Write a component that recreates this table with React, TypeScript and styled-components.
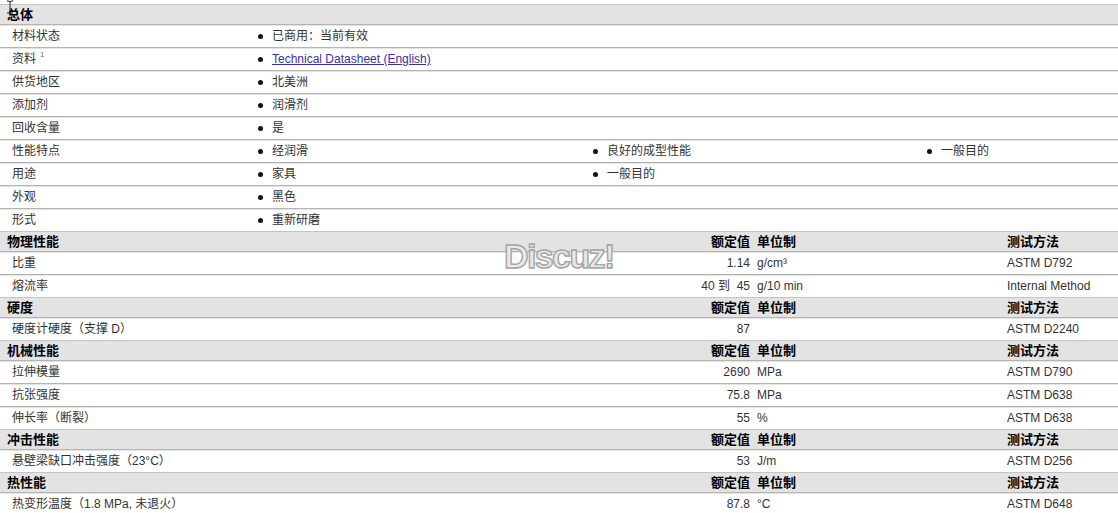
import React from "react";
import styled, { createGlobalStyle } from "styled-components";

const GlobalStyle = createGlobalStyle`
  html, body { margin: 0; padding: 0; background: #ffffff; }
  body {
    font-family: "Liberation Sans", Arial, "Noto Sans CJK SC", sans-serif;
    font-size: 12px;
    color: #333333;
  }
`;

const Page = styled.div`
  position: relative;
  padding-top: 4px;
  width: 1118px;
  overflow: hidden;
`;

const Cursor = styled.svg`
  position: absolute;
  left: 5px;
  top: 0;
`;

const Watermark = styled.div`
  position: absolute;
  left: 504px;
  top: 237px;
  font-family: "Liberation Sans", Arial, sans-serif;
  font-weight: 700;
  font-size: 34px;
  letter-spacing: -1.6px;
  color: #e8e8e8;
  -webkit-text-stroke: 1.4px #a4a4a4;
  pointer-events: none;
`;

const HeaderBar = styled.div<{ $cols?: string }>`
  display: grid;
  grid-template-columns: ${(p) => p.$cols || "1fr"};
  align-items: center;
  height: 20px;
  box-sizing: border-box;
  background: #e3e3e3;
  border-top: 1px solid #c4c4c4;
  font-family: "Liberation Sans", "Noto Sans CJK SC", sans-serif;
  font-weight: 700;
  font-size: 13px;
  color: #000000;
`;

const HeadCell = styled.div<{ $align?: string; $pl?: number; $pr?: number }>`
  text-align: ${(p) => p.$align || "left"};
  padding-left: ${(p) => p.$pl ?? 0}px;
  padding-right: ${(p) => p.$pr ?? 0}px;
  white-space: nowrap;
  line-height: 19px;
`;

const Row = styled.div<{ $cols: string }>`
  display: grid;
  grid-template-columns: ${(p) => p.$cols};
  align-items: center;
  height: 23px;
  box-sizing: border-box;
  border-top: 1px solid #b4b4b4;
  box-shadow: inset 0 1px 0 #e4e4e4;
  font-family: "Liberation Sans", "Noto Sans CJK SC", sans-serif;
  font-size: 12px;
  color: #333333;
`;

const Cell = styled.div<{ $align?: string; $pl?: number; $pr?: number }>`
  display: flex;
  align-items: center;
  justify-content: ${(p) => (p.$align === "right" ? "flex-end" : "flex-start")};
  padding-left: ${(p) => p.$pl ?? 0}px;
  padding-right: ${(p) => p.$pr ?? 0}px;
  white-space: pre;
  line-height: 22px;
`;

const Bullet = styled.span`
  display: inline-block;
  width: 5px;
  height: 5px;
  border-radius: 50%;
  background: #111111;
  margin-left: 3px;
  margin-right: 9px;
  flex-shrink: 0;
`;

const Sup = styled.sup`
  font-size: 8px;
  color: #777777;
  margin-left: 4px;
  position: relative;
  top: -4px;
`;

const Link = styled.a`
  color: #3a2fa8;
  text-decoration: underline;
`;

const GEN_COLS = "255px 335px 334px 1fr";
const PROP_COLS = "620px 132px 251px 1fr";

type GenRow = { label: React.ReactNode; values: React.ReactNode[] };

const general: GenRow[] = [
  { label: "材料状态", values: ["已商用：当前有效"] },
  {
    label: (
      <>
        资料<Sup>1</Sup>
      </>
    ),
    values: [<Link href="#">Technical Datasheet (English)</Link>],
  },
  { label: "供货地区", values: ["北美洲"] },
  { label: "添加剂", values: ["润滑剂"] },
  { label: "回收含量", values: ["是"] },
  { label: "性能特点", values: ["经润滑", "良好的成型性能", "一般目的"] },
  { label: "用途", values: ["家具", "一般目的"] },
  { label: "外观", values: ["黑色"] },
  { label: "形式", values: ["重新研磨"] },
];

type PropRow = { label: string; value: string; unit: string; method: string };
type Section = { title: string; rows: PropRow[] };

const sections: Section[] = [
  {
    title: "物理性能",
    rows: [
      { label: "比重", value: "1.14", unit: "g/cm³", method: "ASTM D792" },
      { label: "熔流率", value: "40 到  45", unit: "g/10 min", method: "Internal Method" },
    ],
  },
  {
    title: "硬度",
    rows: [{ label: "硬度计硬度（支撑 D）", value: "87", unit: "", method: "ASTM D2240" }],
  },
  {
    title: "机械性能",
    rows: [
      { label: "拉伸模量", value: "2690", unit: "MPa", method: "ASTM D790" },
      { label: "抗张强度", value: "75.8", unit: "MPa", method: "ASTM D638" },
      { label: "伸长率（断裂）", value: "55", unit: "%", method: "ASTM D638" },
    ],
  },
  {
    title: "冲击性能",
    rows: [{ label: "悬壁梁缺口冲击强度（23°C）", value: "53", unit: "J/m", method: "ASTM D256" }],
  },
  {
    title: "热性能",
    rows: [
      { label: "热变形温度（1.8 MPa, 未退火）", value: "87.8", unit: "°C", method: "ASTM D648" },
    ],
  },
];

export default function App() {
  return (
    <>
      <GlobalStyle />
      <Page>
        <Cursor width="10" height="14" viewBox="0 0 10 14">
          <path d="M2 1 H4 L5 2 L6 1 H8 M5 2 V12 M2 13 H4 L5 12 L6 13 H8" stroke="#222" strokeWidth="1" fill="none" />
        </Cursor>

        <HeaderBar>
          <HeadCell $pl={7}>总体</HeadCell>
        </HeaderBar>
        {general.map((r, i) => (
          <Row key={i} $cols={GEN_COLS}>
            <Cell $pl={12}>{r.label}</Cell>
            {r.values.map((v, j) => (
              <Cell key={j}>
                <Bullet />
                {v}
              </Cell>
            ))}
          </Row>
        ))}

        {sections.map((s) => (
          <React.Fragment key={s.title}>
            <HeaderBar $cols={PROP_COLS}>
              <HeadCell $pl={7}>{s.title}</HeadCell>
              <HeadCell $align="right" $pr={2}>额定值</HeadCell>
              <HeadCell $pl={5}>单位制</HeadCell>
              <HeadCell $pl={4}>测试方法</HeadCell>
            </HeaderBar>
            {s.rows.map((r) => (
              <Row key={r.label} $cols={PROP_COLS}>
                <Cell $pl={12}>{r.label}</Cell>
                <Cell $align="right" $pr={2}>{r.value}</Cell>
                <Cell $pl={5}>{r.unit}</Cell>
                <Cell $pl={4}>{r.method}</Cell>
              </Row>
            ))}
          </React.Fragment>
        ))}

        <Watermark>Discuz!</Watermark>
      </Page>
    </>
  );
}
